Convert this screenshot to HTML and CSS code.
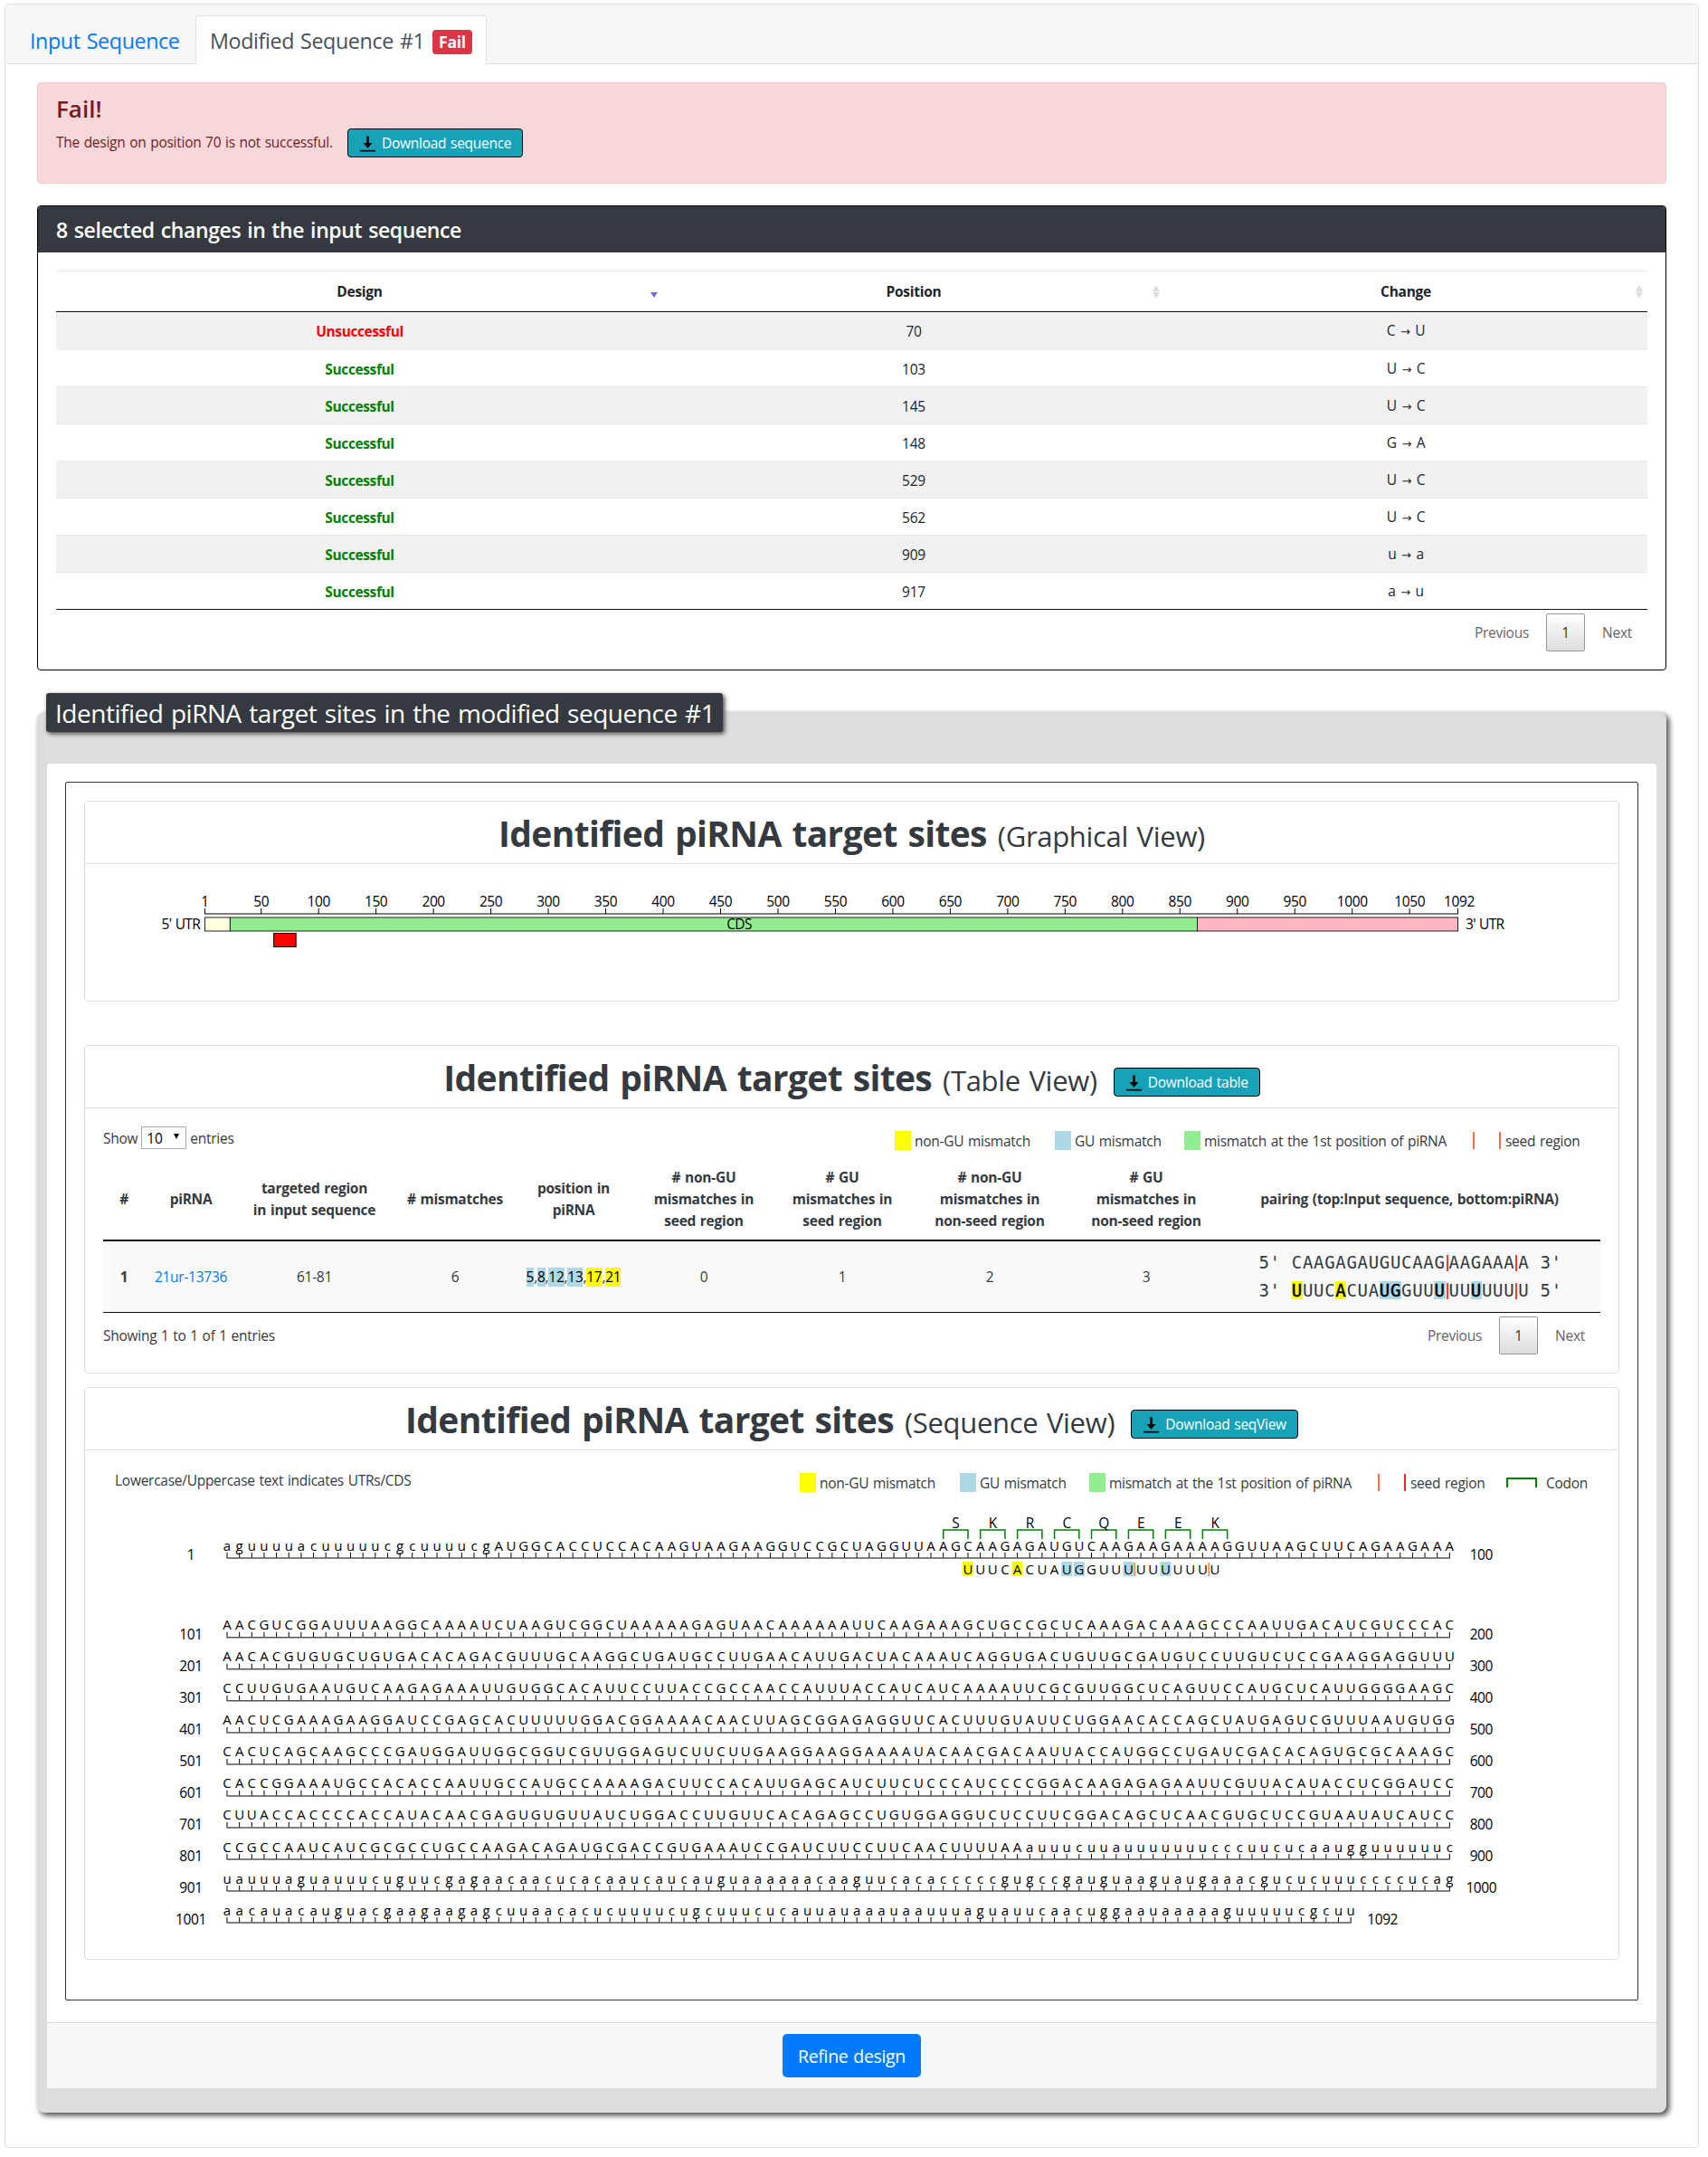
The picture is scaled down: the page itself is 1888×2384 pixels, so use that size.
FILE: index.html
```html
<!DOCTYPE html>
<html lang="en">
<head>
<meta charset="utf-8">
<title>Modified Sequence #1</title>
<link rel="stylesheet" href="styles.css">
</head>
<body>
<svg width="0" height="0" class="defs">
  <symbol id="download" viewBox="0 0 17 18">
    <path d="M7.2 0.5h2.6v7.5h3.7L8.5 13.8 3.5 8h3.7z"/>
    <path d="M0 15.8h17v1.7H0z"/>
  </symbol>
</svg>
<main class="shell">
  <nav class="tabs">
    <a class="tab">Input Sequence</a>
    <a class="tab active">Modified Sequence #1 <span class="badge">Fail</span></a>
  </nav>
  <div class="content">
    <section class="alert">
      <h4>Fail!</h4>
      <div class="alert-line">
        <span>The design on position 70 is not successful.</span>
        <button class="download"><svg class="icon"><use href="#download"/></svg><span>Download sequence</span></button>
      </div>
    </section>

    <section class="changes">
      <header>8 selected changes in the input sequence</header>
      <div class="changes-body">
        <table class="design">
          <colgroup><col class="c1"><col class="c2"><col class="c3"></colgroup>
          <thead><tr>
            <th>Design<i class="sorted"></i></th>
            <th>Position<i class="sort"></i></th>
            <th>Change<i class="sort"></i></th>
          </tr></thead>
          <tbody>
            <tr><td class="bad">Unsuccessful</td><td>70</td><td>C <b>→</b> U</td></tr>
            <tr><td class="good">Successful</td><td>103</td><td>U <b>→</b> C</td></tr>
            <tr><td class="good">Successful</td><td>145</td><td>U <b>→</b> C</td></tr>
            <tr><td class="good">Successful</td><td>148</td><td>G <b>→</b> A</td></tr>
            <tr><td class="good">Successful</td><td>529</td><td>U <b>→</b> C</td></tr>
            <tr><td class="good">Successful</td><td>562</td><td>U <b>→</b> C</td></tr>
            <tr><td class="good">Successful</td><td>909</td><td>u <b>→</b> a</td></tr>
            <tr><td class="good">Successful</td><td>917</td><td>a <b>→</b> u</td></tr>
          </tbody>
        </table>
        <div class="pager"><span>Previous</span><span class="page">1</span><span>Next</span></div>
      </div>
    </section>

    <section class="group">
      <h3 class="legend-title">Identified piRNA target sites in the modified sequence #1</h3>
      <div class="panel">
        <div class="frame">
          <article class="view graph">
            <header><strong>Identified piRNA target sites</strong><small>(Graphical View)</small></header>
            <svg class="graph-svg" id="graph" viewBox="94 955 1694 150"></svg>
          </article>

          <article class="view table-view">
            <header><strong>Identified piRNA target sites</strong><small>(Table View)</small>
              <button class="download"><svg class="icon"><use href="#download"/></svg><span>Download table</span></button></header>
            <div class="table-body">
              <div class="controls">
                <div class="length"><span>Show</span><span class="select">10<i></i></span><span>entries</span></div>
                <div class="key">
                  <i class="sw yellow"></i><span class="k1">non-GU mismatch</span>
                  <i class="sw blue"></i><span class="k2">GU mismatch</span>
                  <i class="sw green"></i><span class="k3">mismatch at the 1st position of piRNA</span>
                  <i class="bar orange"></i><i class="bar orange second"></i><span class="k4">seed region</span>
                </div>
              </div>
              <table class="sites">
                <colgroup><col class="s1"><col class="s2"><col class="s3"><col class="s4"><col class="s5"><col class="s6"><col class="s7"><col class="s8"><col class="s9"><col></colgroup>
                <thead><tr>
                  <th>#</th><th>piRNA</th><th>targeted region<br>in input sequence</th><th># mismatches</th><th>position in<br>piRNA</th>
                  <th># non-GU<br>mismatches in<br>seed region</th><th># GU<br>mismatches in<br>seed region</th>
                  <th># non-GU<br>mismatches in<br>non-seed region</th><th># GU<br>mismatches in<br>non-seed region</th>
                  <th>pairing (top:Input sequence, bottom:piRNA)</th>
                </tr></thead>
                <tbody><tr>
                  <td class="num">1</td><td><a>21ur-13736</a></td><td>61-81</td><td>6</td>
                  <td class="pos"><mark class="blue">5</mark>,<mark class="blue">8</mark>,<mark class="blue">12</mark>,<mark class="blue">13</mark>,<mark class="yellow">17</mark>,<mark class="yellow">21</mark></td>
                  <td>0</td><td>1</td><td>2</td><td>3</td>
                  <td><div class="pairing">
                    <div>5' <span class="seq">CAAGAGAUGUCAAG<i></i>AAGAAA<i></i>A</span> 3'</div>
                    <div>3' <span class="seq"><mark class="yellow">U</mark>UUC<mark class="yellow">A</mark>CUA<mark class="blue">UG</mark>GUU<mark class="blue">U</mark><i></i>UU<mark class="blue">U</mark>UUU<i></i>U</span> 5'</div>
                  </div></td>
                </tr></tbody>
              </table>
              <div class="foot"><span>Showing 1 to 1 of 1 entries</span>
                <div class="pager"><span>Previous</span><span class="page">1</span><span>Next</span></div></div>
            </div>
          </article>

          <article class="view seq-view">
            <header><strong>Identified piRNA target sites</strong><small>(Sequence View)</small>
              <button class="download"><svg class="icon"><use href="#download"/></svg><span>Download seqView</span></button></header>
            <div class="seq-key">
              <span class="note">Lowercase/Uppercase text indicates UTRs/CDS</span>
              <div class="key">
                <i class="sw yellow"></i><span class="k1">non-GU mismatch</span>
                <i class="sw blue"></i><span class="k2">GU mismatch</span>
                <i class="sw green"></i><span class="k3">mismatch at the 1st position of piRNA</span>
                <i class="bar orange"></i><i class="bar red second"></i><span class="k4">seed region</span>
                <i class="codon"></i><span class="k5">Codon</span>
              </div>
            </div>
            <svg class="seq-svg" id="sequence" viewBox="94 1660 1694 500"></svg>
          </article>
        </div>
        <footer><button class="refine">Refine design</button></footer>
      </div>
    </section>
  </div>
</main>
<script src="charts.js"></script>
</body>
</html>
```
FILE: styles.css
```css
* { box-sizing: border-box; letter-spacing: -.017em; word-spacing: .06em; }
body { margin: 0; padding: 4px 10px 10px 5px; background: #fff; color: #212529; font: 15.5px/24px "Open Sans", "Noto Sans", sans-serif; }
h3, h4 { margin: 0; }
button { font-family: inherit; cursor: pointer; }
table { border-collapse: separate; border-spacing: 0; table-layout: fixed; }
.defs { position: absolute; }

.shell { height: 2370px; border: 1px solid #dfdfdf; border-radius: 4px; }
.tabs { display: flex; align-items: flex-end; height: 66px; padding-left: 11px; background: #f7f7f7; border-bottom: 1px solid #dfdfdf; border-radius: 3px 3px 0 0; }
.tab { display: flex; align-items: center; height: 54px; padding: 0 15px; margin-bottom: -1px; border: 1px solid transparent; border-bottom: 0; border-radius: 4px 4px 0 0; font-size: 23.3px; color: #007bff; white-space: pre; }
.tab:first-child { width: 199px; }
.tab.active { width: 322px; background: #fff; border-color: #dee2e6; color: #495057; }
.badge { height: 27px; margin: 3px 0 0 1px; padding: 0 7.5px; border-radius: 4px; background: #dc3545; color: #fff; font-size: 17.5px; font-weight: 700; line-height: 27px; }
.content { padding: 20px 35px 0 35px; }

.alert { height: 112px; padding: 11px 20px; border: 1px solid #f5c6cb; border-radius: 4px; background: #f8d7da; color: #721c24; }
.alert h4 { font-size: 26px; font-weight: 600; line-height: 34px; letter-spacing: 0; }
.alert-line { display: flex; gap: 17px; height: 42px; align-items: center; }
.alert-line > span { width: 305px; white-space: nowrap; position: relative; top: -1px; }
.download { display: flex; align-items: center; gap: 7px; height: 32px; padding: 0 12px 0 13px; border: 1px solid #000; border-radius: 4px; background: #17a2b8; color: #fff; font-size: 15.5px; white-space: nowrap; }
.download .icon { width: 17px; height: 18px; fill: #000; margin-top: 2px; }

.changes { height: 514px; margin-top: 24px; border: 1px solid #000; border-radius: 4px; }
.changes header { height: 51px; padding: 0 20px; background: #343a40; border-radius: 3px 3px 0 0; color: #fff; font-size: 23px; font-weight: 600; line-height: 52px; }
.changes-body { padding: 20px 20px; }
.design { width: 1759px; text-align: center; border-bottom: 1px solid #111; }
.c1 { width: 671px; } .c2 { width: 554px; } .c3 { width: 534px; }
.design th { position: relative; height: 46px; padding: 0; border-top: 1px solid #e6e6e6; border-bottom: 1px solid #111; font-weight: 700; }
.design td { height: 41px; padding: 1px 0 0; border-top: 1px solid #e6e6e6; }
.design tr:first-child td { border-top: 0; }
.design tbody tr:nth-child(odd) { background: #f1f1f1; }
.design td b { margin: 0 1px; font-family: "DejaVu Sans", sans-serif; font-size: 13px; font-weight: 400; }
.design .bad, .design .good { font-weight: 700; color: red; letter-spacing: -.025em; }
.design .good { color: green; }
.sort::before, .sort::after, .sorted { content: ""; position: absolute; right: 5px; border: 4.5px solid transparent; }
.sort::before { top: 11px; border-bottom: 7px solid #dcdcdc; }
.sort::after { top: 23px; border-top: 7px solid #dcdcdc; border-bottom: 0; }
.sort::before { border-top: 0; top: 15px; }
.sorted { right: 6px; top: 23px; border-top: 6px solid #7068dd; border-bottom: 0; }
.pager { display: flex; justify-content: flex-end; align-items: center; color: #666; height: 42px; }
.pager span { margin-right: 17px; }
.pager .page { width: 43px; height: 42px; border: 1px solid #979797; border-radius: 2px; background: linear-gradient(#fff, #dcdcdc); color: #333; line-height: 40px; text-align: center; margin-left: 2px; margin-right: 19px; }
.changes .pager { margin-top: 4px; }

.group { position: relative; height: 1548px; margin-top: 46px; padding: 57px 11px 0; border-radius: 8px; background: #ddd; box-shadow: 3px 3px 6px #444; }
.legend-title { position: absolute; left: 10px; top: -21px; width: 748px; height: 43px; padding-left: 10px; border-radius: 3px; background: #343a40; box-shadow: 2px 2px 5px #444; color: #fff; font-size: 28px; font-weight: 400; line-height: 44px; white-space: nowrap; }
.panel { height: 1464px; border-radius: 4px; background: #fff; padding-top: 20px; }
.frame { width: 1739px; height: 1347px; margin-left: 20px; border: 1px solid #343a40; border-radius: 2px; padding: 20px; }
.panel footer { height: 73px; margin-top: 24px; padding-top: 12px; border-top: 1px solid #d8d8d8; background: #f7f7f7; text-align: center; }
.refine { width: 153px; height: 48px; border: 0; border-radius: 5px; background: #007bff; color: #fff; font-size: 19.5px; }

.view { width: 1697px; border: 1px solid #dfdfdf; border-radius: 4px; color: #343a40; }
.graph { height: 222px; }
.table-view { height: 363px; margin-top: 48px; }
.seq-view { height: 633px; margin-top: 15px; }
.view > header { display: flex; justify-content: center; align-items: baseline; height: 69px; padding-top: 8px; border-bottom: 1px solid #dfdfdf; white-space: nowrap; line-height: 54px; }
.view strong { font-size: 39px; font-weight: 700; }
.view small { margin-left: 12px; font-size: 31px; letter-spacing: -.01em; }
.view > header .download { margin-left: 18px; align-self: flex-start; margin-top: 16px; line-height: 24px; }
.graph-svg { display: block; width: 1694px; height: 150px; }
.seq-svg { display: block; width: 1694px; height: 500px; margin-top: -2px; }

.table-body { padding: 20px 19px 20px 20px; }
.controls { display: flex; justify-content: space-between; height: 44px; }
.length { display: flex; gap: 4px; height: 25px; align-items: center; }
.select { display: flex; align-items: center; justify-content: space-between; width: 50px; height: 25px; padding: 0 7px 0 5px; border: 1px solid #a9a9a9; color: #000; }
.select i { border: 3px solid transparent; border-top: 6px solid #000; border-bottom: 0; margin-top: -3px; }
.key { display: flex; align-items: center; height: 21px; margin-top: 5px; white-space: nowrap; }
.sw { width: 18px; height: 21px; margin-right: 4px; }
.yellow { background: #ff0; } .blue { background: #add8e6; } .green { background: #90ee90; }
.k1 { width: 155px; } .k2 { width: 121px; } .k3 { width: 297px; } .k4 { width: 106px; }
.bar { width: 2px; height: 19px; }
.orange { background: #ff6a4a; } .red { background: #ff2030; }
.bar.second { margin: 0 5px 0 27px; }
.codon { width: 34px; height: 11px; border: 2px solid green; border-bottom: 0; margin-right: 10px; }
.sites { width: 1655px; text-align: center; border-bottom: 1px solid #111; }
.s1 { width: 46px; } .s2 { width: 102px; } .s3 { width: 171px; } .s4 { width: 140px; } .s5 { width: 122px; }
.s6 { width: 166px; } .s7 { width: 140px; } .s8 { width: 186px; } .s9 { width: 160px; }
.sites th { height: 83px; padding: 0 0 9px; border-bottom: 2px solid #111; font-weight: 700; vertical-align: middle; white-space: nowrap; }
.sites td { height: 78px; padding: 0; background: #f9f9f9; white-space: nowrap; }
.sites .num { font-weight: 700; }
.sites a { color: #007bff; }
mark { color: #000; }
.pos mark { display: inline-block; height: 21px; line-height: 21px; }
.pairing { width: 333px; margin: 0 auto; font-size: 19px; line-height: 31px; text-align: left; }
.pairing, .pairing * { font-family: "DejaVu Sans Mono", monospace; letter-spacing: .68px; word-spacing: 0; }
.pairing div { white-space: pre; }
.pairing mark { display: inline-block; line-height: 20px; height: 20px; font-weight: 400; -webkit-text-stroke: .5px #000; }
.pairing i { display: inline-block; width: 2px; height: 18px; margin: 0 1px; background: #ff3b30; vertical-align: -3px; }
.foot { display: flex; justify-content: space-between; align-items: center; margin-top: 4px; }
.foot .pager { margin-right: 1px; }
.seq-key { display: flex; justify-content: space-between; height: 58px; padding: 20px 0 0 33px; }
.seq-key .note { line-height: 26px; }
.seq-key .key { width: 905px; }

svg text { font-size: 15.5px; fill: #000; letter-spacing: -.025em; }
svg .mid { text-anchor: middle; }
svg .end { text-anchor: end; }
svg .utr { letter-spacing: -.045em; }
svg .axis { stroke: #000; stroke-width: 1; fill: none; }
svg .base { stroke: #555; stroke-width: 1.5; }
svg .bracket { stroke: green; stroke-width: 1.5; fill: none; }
svg .seed { stroke: #ff7f50; stroke-width: 1.5; }
svg .letters { font-size: 15px; text-anchor: middle; letter-spacing: 0; }
svg .hit-yellow { fill: #ff0; } svg .hit-blue { fill: #add8e6; }
```
FILE: charts.js
```js
const NS = 'http://www.w3.org/2000/svg';
function add(parent, tag, attrs, text) {
  const el = document.createElementNS(NS, tag);
  for (const k in attrs) el.setAttribute(k, attrs[k]);
  if (text !== undefined) el.textContent = text;
  parent.appendChild(el);
  return el;
}

// Graphical view: ruler, transcript regions and the target site
const graph = document.getElementById('graph');
const total = 1092;
const gx = n => 226.5 + (n - 1) * 1385 / (total - 1);
const marks = [1];
for (let n = 50; n <= 1050; n += 50) marks.push(n);
marks.push(total);
add(graph, 'rect', { x: 226, y: 1009, width: 1386, height: 2, fill: '#808080' });
marks.forEach(n => {
  add(graph, 'path', { class: 'axis', d: `M${gx(n)} 1004V1010` });
  add(graph, 'text', { class: 'mid', x: gx(n) + (n === total ? 1.5 : 0), y: 1001.5 }, n);
});
[[226.5, 254.4, '#ffffe0'], [254.4, 1323.5, '#90ee90'], [1323.5, 1611.5, '#ffb6c1']].forEach(([a, b, fill]) =>
  add(graph, 'rect', { x: a, y: 1014, width: b - a, height: 15, fill, stroke: '#222' }));
add(graph, 'rect', { x: gx(61), y: 1031.5, width: 24.5, height: 15, fill: 'red', stroke: '#000' });
add(graph, 'text', { class: 'end utr', x: 221, y: 1027 }, "5' UTR");
add(graph, 'text', { class: 'utr', x: 1620, y: 1027 }, "3' UTR");
add(graph, 'text', { class: 'mid utr', x: 817, y: 1027 }, 'CDS');

// Sequence view: one hundred bases a row
const rows = [
  'aguuuuacuuuuucgcuuuucgAUGGCACCUCCACAAGUAAGAAGGUCCGCUAGGUUAAGCAAGAGAUGUCAAGAAGAAAAGGUUAAGCUUCAGAAGAAA',
  'AACGUCGGAUUUAAGGCAAAAUCUAAGUCGGCUAAAAAGAGUAACAAAAAAUUCAAGAAAGCUGCCGCUCAAAGACAAAGCCCAAUUGACAUCGUCCCAC',
  'AACACGUGUGCUGUGACACAGACGUUUGCAAGGCUGAUGCCUUGAACAUUGACUACAAAUCAGGUGACUGUUGCGAUGUCCUUGUCUCCGAAGGAGGUUU',
  'CCUUGUGAAUGUCAAGAGAAAUUGUGGCACAUUCCUUACCGCCAACCAUUUACCAUCAUCAAAAUUCGCGUUGGCUCAGUUCCAUGCUCAUUGGGGAAGC',
  'AACUCGAAAGAAGGAUCCGAGCACUUUUUGGACGGAAAACAACUUAGCGGAGAGGUUCACUUUGUAUUCUGGAACACCAGCUAUGAGUCGUUUAAUGUGG',
  'CACUCAGCAAGCCCGAUGGAUUGGCGGUCGUUGGAGUCUUCUUGAAGGAAGGAAAAUACAACGACAAUUACCAUGGCCUGAUCGACACAGUGCGCAAAGC',
  'CACCGGAAAUGCCACACCAAUUGCCAUGCCAAAAGACUUCCACAUUGAGCAUCUUCUCCCAUCCCCGGACAAGAGAGAAUUCGUUACAUACCUCGGAUCC',
  'CUUACCACCCCACCAUACAACGAGUGUGUUAUCUGGACCUUGUUCACAGAGCCUGUGGAGGUCUCCUUCGGACAGCUCAACGUGCUCCGUAAUAUCAUCC',
  'CCGCCAAUCAUCGCGCCUGCCAAGACAGAUGCGACCGUGAAAUCCGAUCUUCCUUCAACUUUUAAauuucuuauuuuuuucccuucucaaugguuuuuuc',
  'uauuuaguauuucuguucgagaacaacucacaaucaucauguaaaaaacaaguucacacccccgugccgauguaaguaugaaacgucucuuuccccucag',
  'aacauacauguacgaagaagagcuuaacacucuuuucugcuuucucauuauaaauaauuuaguauucaacuggaauaaaaaguuuuucgcuu'
];
const svg = document.getElementById('sequence');
const pitch = 13.65;
const sx = i => +(251 + i * pitch).toFixed(2);
const letters = (s, from, y) =>
  add(svg, 'text', { class: 'letters', x: [...s].map((_, i) => sx(from + i)).join(' '), y }, s);

rows.forEach((s, r) => {
  const line = r === 0 ? 1723 : 1810.8 + (r - 1) * 35.03;
  const last = sx(s.length - 1);
  let ticks = '';
  for (let i = 0; i < s.length; i++) ticks += `M${sx(i)} ${line - 6}V${line}`;
  add(svg, 'path', { class: 'axis', d: ticks });
  add(svg, 'path', { class: 'base', d: `M${sx(0) - .5} ${line}H${last + .5}` });
  letters(s, 0, line - 8.5);
  add(svg, 'text', { class: 'mid', x: 211, y: line + 1.8 }, r * 100 + 1);
  add(svg, 'text', { class: 'mid', x: last + 35, y: line + 1.8 }, r * 100 + s.length);
});

[...'SKRCQEEK'].forEach((aa, k) => {
  const a = sx(58 + k * 3), b = sx(60 + k * 3);
  add(svg, 'path', { class: 'bracket', d: `M${a} 1702V1692H${b}V1702` });
  add(svg, 'text', { class: 'mid', x: (a + b) / 2, y: 1690 }, aa);
});
[[0, 'yellow'], [4, 'yellow'], [8, 'blue'], [9, 'blue'], [13, 'blue'], [16, 'blue']].forEach(([i, c]) =>
  add(svg, 'rect', { class: 'hit-' + c, x: sx(60 + i) - 6, y: 1727, width: 12, height: 16 }));
letters('UUUCACUAUGGUUUUUUUUUU', 60, 1741);
[13, 19].forEach(i => add(svg, 'path', { class: 'seed', d: `M${sx(60 + i) + 6.8} 1728V1743` }));
```
